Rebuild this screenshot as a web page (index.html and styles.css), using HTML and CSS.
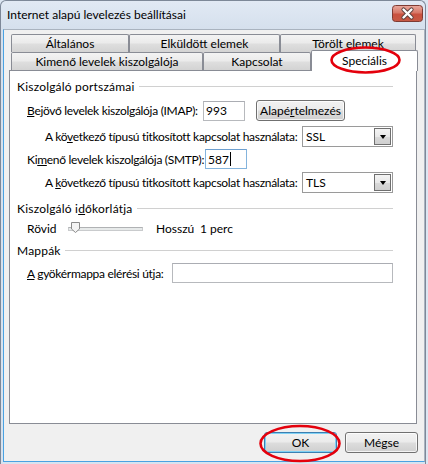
FILE: index.html
```html
<!DOCTYPE html>
<html lang="hu">
<head>
<meta charset="utf-8">
<title>Internet alapú levelezés beállításai</title>
<link rel="stylesheet" href="styles.css">
</head>
<body>
<div class="window">
  <div class="titlebar">
    <span class="title">Internet alapú levelezés beállításai</span>
    <div class="close">
      <svg width="31" height="17" viewBox="0 0 31 17">
        <defs>
          <linearGradient id="cg" x1="0" y1="0" x2="0" y2="1">
            <stop offset="0" stop-color="#e9aa9f"/>
            <stop offset="0.45" stop-color="#d77868"/>
            <stop offset="0.55" stop-color="#c9513f"/>
            <stop offset="1" stop-color="#c65a45"/>
          </linearGradient>
        </defs>
        <rect x="0.5" y="0.5" width="30" height="16" rx="3" fill="url(#cg)" stroke="#7e3b33"/>
        <path d="M11.5 4.5 L19.5 12.5 M19.5 4.5 L11.5 12.5" stroke="#5a3f3c" stroke-width="4.2" stroke-linecap="round"/>
        <path d="M11.5 4.5 L19.5 12.5 M19.5 4.5 L11.5 12.5" stroke="#ffffff" stroke-width="2.4" stroke-linecap="round"/>
      </svg>
    </div>
  </div>
  <div class="client">
    <div class="tabs">
      <div class="tabrow">
        <div class="tab t-altalanos">Általános</div>
        <div class="tab t-elkuldott">Elküldött elemek</div>
        <div class="tab t-torolt">Törölt elemek</div>
      </div>
      <div class="tabrow">
        <div class="tab t-kimeno">Kimenő levelek kiszolgálója</div>
        <div class="tab t-kapcsolat">Kapcsolat</div>
        <div class="tab active t-specialis">Speciális</div>
      </div>
    </div>
    <div class="panel">
      <div class="group g-first"><span>Kiszolgáló portszámai</span><i class="rule"></i></div>
      <div class="row r-imap">
        <span class="label tight l-imap"><u>B</u>ejövő levelek kiszolgálója (IMAP):</span>
        <div class="textbox">993</div>
        <div class="btn b-default-set">Alapé<u>r</u>telmezés</div>
      </div>
      <div class="row r-ssl">
        <span class="label tight l-enc">A kö<u>v</u>etkező típusú titkosított kapcsolat használata:</span>
        <div class="combo"><span>SSL</span><span class="drop"><i class="tri"></i></span></div>
      </div>
      <div class="row r-smtp">
        <span class="label tight l-smtp">Ki<u>m</u>enő levelek kiszolgálója (SMTP):</span>
        <div class="textbox focused">587<i class="caret"></i></div>
      </div>
      <div class="row r-tls">
        <span class="label tight l-enc">A <u>k</u>övetkező típusú titkosított kapcsolat használata:</span>
        <div class="combo"><span>TLS</span><span class="drop"><i class="tri"></i></span></div>
      </div>
      <div class="group g-timeout"><span>Kiszolgáló i<u>d</u>őkorlátja</span><i class="rule"></i></div>
      <div class="row r-slider">
        <span class="label l-short">Rövid</span>
        <div class="slider">
          <i class="track"></i>
          <svg class="thumb" width="9" height="11" viewBox="0 0 9 11">
            <path d="M0.5 0.5 H8.5 V7 L4.5 10.5 L0.5 7 Z" fill="#f4f4f4" stroke="#8b8b8b"/>
          </svg>
        </div>
        <span class="label l-long">Hosszú</span>
        <span class="label">1 perc</span>
      </div>
      <div class="group g-folders"><span>Mappák</span><i class="rule"></i></div>
      <div class="row r-root">
        <span class="label tight l-root"><u>A</u> gyökérmappa elérési útja:</span>
        <div class="textbox wide"></div>
      </div>
    </div>
    <div class="footer">
      <div class="btn default">OK</div>
      <div class="btn">Mégse</div>
    </div>
  </div>
</div>
<svg class="marks" width="428" height="464" viewBox="0 0 428 464">
  <ellipse cx="365.5" cy="60" rx="34" ry="12.5" fill="none" stroke="#e4000c" stroke-width="2.6"/>
  <ellipse cx="300" cy="443.5" rx="39.5" ry="17.5" fill="none" stroke="#e4000c" stroke-width="2.6"/>
</svg>
</body>
</html>
```
FILE: styles.css
```css
* { box-sizing: border-box; }
html, body { margin: 0; padding: 0; }
body {
  position: relative;
  width: 428px;
  height: 464px;
  overflow: hidden;
  background: #dce6f2;
  font-family: Lato, "Noto Sans", sans-serif;
  font-size: 12px;
  color: #000;
}
u { text-decoration: underline; text-underline-offset: 1px; }

.window {
  width: 426px;
  height: 464px;
  border: 1px solid #7d8898;
  border-bottom: none;
  border-radius: 6px 6px 0 0;
  background: linear-gradient(#e1e9f4, #d5e0ed 28px, #d8e3ef);
}
.titlebar {
  height: 28px;
  display: flex;
  align-items: flex-start;
  justify-content: space-between;
  padding: 0 2px 0 6px;
}
.title { margin-top: 6px; line-height: 15px; }
.close { margin-top: 4px; height: 17px; }
.close svg { display: block; }

.client {
  margin-left: 2px;
  width: 422px;
  height: 433px;
  border: 1px solid #a9b3bf;
  border-left-color: #4aa2e2;
  border-bottom-color: #4aa2e2;
  background: #f0f0f0;
}

.tabs { margin-left: 5px; width: 408px; padding: 4px 0 0 2px; }
.tabrow { display: flex; height: 18px; align-items: flex-start; }
.tab {
  flex-shrink: 0;
  height: 18px;
  border: 1px solid #898c95;
  border-bottom: none;
  border-radius: 2px 2px 0 0;
  background: linear-gradient(#f3f3f3, #ebebeb 45%, #dedede 55%, #d3d3d3);
  display: flex;
  align-items: center;
  justify-content: center;
  line-height: 16px;
  white-space: nowrap;
}
.t-altalanos { width: 118px; }
.t-elkuldott { width: 151px; }
.t-torolt { width: 136px; }
.t-kimeno { width: 192px; }
.t-kapcsolat { width: 108px; }
.tab.active {
  position: relative;
  z-index: 2;
  width: 107px;
  height: 21px;
  margin-top: -2px;
  background: #fff;
  padding-bottom: 1px;
}

.panel {
  margin-left: 5px;
  width: 408px;
  height: 354px;
  border: 1px solid #898c95;
  background: #fff;
  padding: 6px 23px 0 7px;
  display: flex;
  flex-direction: column;
}
.group { display: flex; align-items: center; height: 18px; white-space: nowrap; letter-spacing: 0.2px; }
.rule { flex: 1; height: 1px; background: #d0d0d0; margin-left: 4px; }
.g-timeout { margin-top: 6px; }
.g-folders { margin-top: 4px; }

.row { display: flex; align-items: center; white-space: nowrap; margin-left: 10px; }
.r-imap { margin-top: 5px; height: 21px; }
.r-ssl { margin-top: 5px; height: 21px; margin-left: 28px; }
.r-smtp { margin-top: 2px; height: 20px; }
.r-tls { margin-top: 3px; height: 21px; margin-left: 28px; }
.r-slider { margin-top: 2px; height: 18px; }
.r-root { margin-top: 4px; height: 20px; }

.label { display: block; }
.label.tight { letter-spacing: -0.3px; }
.l-imap { width: 176px; }
.l-smtp { width: 178px; }
.l-enc { width: 257px; }
.l-short { width: 41px; }
.l-long { width: 44px; }
.l-root { width: 145px; }

.textbox {
  width: 42px;
  height: 20px;
  border: 1px solid #b7b9bd;
  border-top-color: #abadb3;
  background: #fff;
  padding-left: 2px;
  display: flex;
  align-items: center;
}
.textbox.focused { border-color: #84b4dd; border-top-color: #6d9fcf; }
.textbox.wide { width: 221px; }
.caret { width: 1px; height: 14px; background: #000; margin-left: 1px; }

.combo {
  width: 91px;
  height: 21px;
  border: 1px solid #9a9a9a;
  background: #fff;
  display: flex;
  align-items: center;
  justify-content: space-between;
  padding: 0 1px 0 3px;
}
.drop {
  width: 17px;
  height: 17px;
  border: 1px solid #6f6f6f;
  background: linear-gradient(#f4f4f4, #e8e8e8 50%, #d9d9d9 51%, #cfcfcf);
  display: flex;
  align-items: center;
  justify-content: center;
}
.tri {
  width: 0;
  height: 0;
  border-left: 3.5px solid transparent;
  border-right: 3.5px solid transparent;
  border-top: 4px solid #000;
  margin-top: 1px;
}

.slider {
  position: relative;
  width: 75px;
  height: 18px;
  margin-right: 13px;
  display: flex;
  align-items: center;
}
.track {
  width: 75px;
  height: 4px;
  border: 1px solid #c9cbcd;
  border-top-color: #b0b2b4;
  background: #e7eaea;
  margin-top: 1px;
}
.thumb { position: absolute; left: 3px; top: 3px; }

.btn {
  height: 21px;
  padding: 0 6px;
  border: 1px solid #707070;
  border-radius: 3px;
  background: linear-gradient(#f2f2f2, #ebebeb 48%, #dddddd 52%, #cfcfcf);
  box-shadow: inset 0 0 0 1px rgba(255,255,255,0.75);
  display: flex;
  align-items: center;
  justify-content: center;
  white-space: nowrap;
}
.b-default-set { width: 89px; margin-left: 11px; }

.footer {
  display: flex;
  justify-content: flex-end;
  gap: 8px;
  margin-top: 8px;
  padding-right: 6px;
}
.footer .btn { width: 73px; }
.btn.default {
  border-color: #3c7fb1;
  box-shadow: inset 0 0 0 1px #7fd1f5;
}

.marks { position: absolute; left: 0; top: 0; z-index: 10; pointer-events: none; }
```
